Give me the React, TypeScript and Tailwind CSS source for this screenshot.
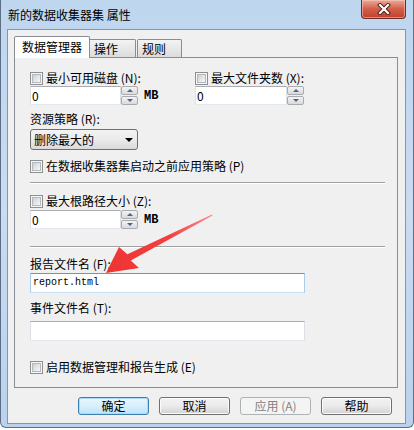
import React from "react";

const FONT = "font-['Noto_Sans_CJK_SC','Noto_Sans',sans-serif]";

function CheckBox() {
  return (
    <span className="w-[13px] h-[13px] shrink-0 border border-[#8e8f8f] bg-[#f6f6f6] p-[1px] flex">
      <span className="flex-1 border border-[#b4b9bf] bg-gradient-to-br from-[#cdd0d4] to-[#f8f8f8]" />
    </span>
  );
}

function CheckRow({ label, className = "" }: { label: string; className?: string }) {
  return (
    <div className={`flex items-center h-[16px] gap-[3px] ${className}`}>
      <CheckBox />
      <span className="whitespace-nowrap">{label}</span>
    </div>
  );
}

function SpinButton({ up }: { up: boolean }) {
  return (
    <div className="h-[9px] w-[17px] rounded-[2px] border border-[#a9abae] bg-gradient-to-b from-[#f4f4f4] to-[#d9dadc] flex items-center justify-center">
      {up ? (
        <span className="w-0 h-0 border-x-[3px] border-x-transparent border-b-[3px] border-b-[#4f6389]" />
      ) : (
        <span className="w-0 h-0 border-x-[3px] border-x-transparent border-t-[3px] border-t-[#4f6389]" />
      )}
    </div>
  );
}

function SpinBox({ inputClass, unit }: { inputClass: string; unit?: boolean }) {
  return (
    <div className="flex items-center h-[19px]">
      <div
        className={`${inputClass} h-[19px] bg-white border border-[#dbdfe6] border-t-[#abadb3] border-b-[#e3e9ef] flex items-center pl-[1px] text-[12px]`}
      >
        0
      </div>
      <div className="flex flex-col gap-px">
        <SpinButton up />
        <SpinButton up={false} />
      </div>
      {unit && (
        <span className="ml-[6px] text-[12px] leading-[12px] font-['Liberation_Mono',monospace] font-bold">MB</span>
      )}
    </div>
  );
}

function Separator({ className = "" }: { className?: string }) {
  return (
    <div className={`w-[355px] ${className}`}>
      <div className="h-px bg-[#a0a0a0]" />
      <div className="h-px bg-white" />
    </div>
  );
}

function Btn({ label, kind }: { label: string; kind: "default" | "normal" | "disabled" }) {
  const styles = {
    default: "border-[#3c7fb1] bg-gradient-to-b from-[#eaf6fd] via-[#d7effc] to-[#bce4fa] shadow-[inset_0_0_0_1px_#a8dcf8]",
    normal: "border-[#707070] bg-gradient-to-b from-[#f2f2f2] via-[#ebebeb] to-[#d2d2d2] shadow-[inset_0_0_0_1px_#fbfbfb]",
    disabled: "border-[#adb2b5] bg-[#f4f4f4] text-[#838383]",
  };
  return (
    <div className={`w-[71px] h-[18px] rounded-[3px] border flex items-center justify-center text-[12px] ${styles[kind]}`}>
      {label}
    </div>
  );
}

export default function App() {
  return (
    <div className={`relative w-[414px] h-[430px] bg-white overflow-hidden text-black text-[12px] leading-[16px] ${FONT}`}>
      {/* window frame */}
      <div className="h-[428px] rounded-b-[6px] border-x border-b border-[#5c6f86] bg-gradient-to-b from-[#bfd6ef] via-[#c8dcf2] to-[#bad2ec] flex flex-col px-[6px] pr-[7px] pb-[3px]">
        <div className="h-[29px] flex items-center pl-[1px] text-[12px]">新的数据收集器集 属性</div>

        {/* client area */}
        <div className="flex-1 border border-[#8596ab] bg-[#f0f0f0] flex flex-col pt-[6px] pl-[6px] pr-[7px]">
          {/* tabs */}
          <div className="h-[21px] flex items-end relative z-10">
            <div className="h-[22px] w-[76px] -mb-px bg-white border-t border-x border-[#898c95] rounded-t-[2px] flex items-center pl-[7px] pb-[1px]">
              数据管理器
            </div>
            <div className="h-[18px] w-[46px] border-t border-r border-[#898c95] bg-gradient-to-b from-[#f3f3f3] to-[#dcdcdc] flex items-center pl-[4px] rounded-tr-[2px]">
              操作
            </div>
            <div className="h-[18px] w-[45px] ml-[1px] border-t border-x border-[#898c95] bg-gradient-to-b from-[#f3f3f3] to-[#dcdcdc] flex items-center pl-[4px] rounded-t-[2px]">
              规则
            </div>
          </div>

          {/* tab page */}
          <div className="h-[331px] border border-[#898c95] bg-[#f0f0f0] pl-[15px] flex flex-col">
            <div className="flex mt-[12px]">
              <div className="w-[165px] flex flex-col">
                <CheckRow label="最小可用磁盘 (N):" />
                <SpinBox inputClass="w-[91px]" unit />
              </div>
              <div className="flex flex-col">
                <CheckRow label="最大文件夹数 (X):" />
                <SpinBox inputClass="w-[92px]" />
              </div>
            </div>

            <div className="mt-[6px] h-[16px]">资源策略 (R):</div>
            <div className="mt-[2px] w-[108px] h-[21px] rounded-[3px] border border-[#707070] bg-gradient-to-b from-[#f3f3f3] via-[#ebebeb] to-[#dadada] flex items-center pl-[3px] pr-[4px]">
              <span>删除最大的</span>
              <span className="ml-auto w-0 h-0 border-x-[4px] border-x-transparent border-t-[4px] border-t-black" />
            </div>

            <CheckRow className="mt-[8px]" label="在数据收集器集启动之前应用策略 (P)" />
            <Separator className="mt-[8px]" />

            <CheckRow className="mt-[9px]" label="最大根路径大小 (Z):" />
            <div className="mt-[1px]">
              <SpinBox inputClass="w-[91px]" unit />
            </div>
            <Separator className="mt-[17px]" />

            <div className="mt-[8px] h-[16px]">报告文件名 (F):</div>
            <div className="mt-px w-[275px] h-[20px] bg-white border border-[#a9cdee] border-t-[#5b9bd5] border-b-[#c5def3] flex items-center pl-[2px] text-[10px] font-['Liberation_Mono',monospace]">
              report.html
            </div>

            <div className="mt-[7px] h-[16px]">事件文件名 (T):</div>
            <div className="mt-[5px] w-[275px] h-[20px] bg-white border border-[#dbdfe6] border-t-[#abadb3] border-b-[#e3e9ef]" />

            <CheckRow className="mt-[18px]" label="启用数据管理和报告生成 (E)" />
          </div>

          {/* buttons */}
          <div className="mt-[9px] flex justify-end gap-[10px] pr-[6px]">
            <Btn label="确定" kind="default" />
            <Btn label="取消" kind="normal" />
            <Btn label="应用 (A)" kind="disabled" />
            <Btn label="帮助" kind="normal" />
          </div>
        </div>
      </div>

      {/* close button */}
      <div className="absolute left-[361px] top-0 w-[45px] h-[19px] rounded-b-[4px] border border-t-0 border-[#6b2f2a] bg-gradient-to-b from-[#e9a99b] via-[#d35d45] to-[#c0402e] shadow-[inset_0_0_0_1px_rgba(255,210,200,0.5)] flex items-center justify-center">
        <svg width="14" height="12" viewBox="0 0 14 12">
          <path d="M3 2 L11 10 M11 2 L3 10" stroke="#4a1a14" strokeWidth="4" strokeLinecap="square" />
          <path d="M3 2 L11 10 M11 2 L3 10" stroke="#ffffff" strokeWidth="2.2" strokeLinecap="square" />
        </svg>
      </div>

      {/* red annotation arrow */}
      <svg className="absolute left-0 top-0 pointer-events-none" width="414" height="430" viewBox="0 0 414 430">
        <defs>
          <linearGradient id="arr" x1="212" y1="215" x2="106" y2="273" gradientUnits="userSpaceOnUse">
            <stop offset="0" stopColor="#ff8a8a" />
            <stop offset="0.4" stopColor="#f24040" />
            <stop offset="1" stopColor="#ee3333" />
          </linearGradient>
        </defs>
        <polygon
          points="106,273 119,247 127.4,254.2 212,214.4 212.6,215.6 130.8,260.4 139,268"
          fill="url(#arr)"
        />
      </svg>
    </div>
  );
}
